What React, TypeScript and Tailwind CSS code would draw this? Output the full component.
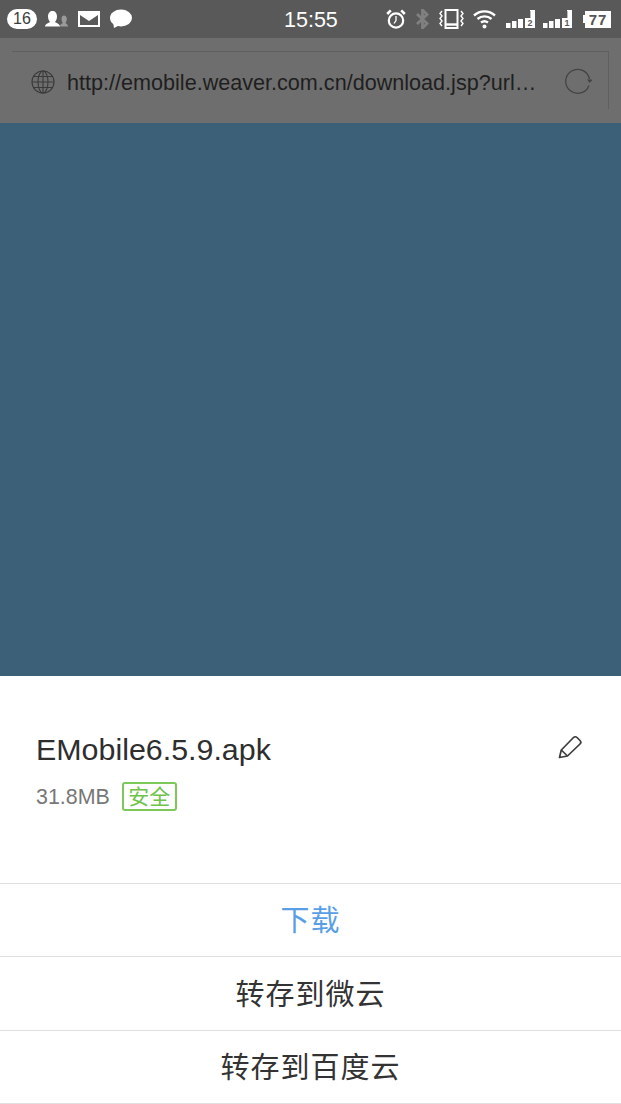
const cjk = "font-['Liberation_Sans','Noto_Sans_CJK_SC',sans-serif]";

function Contacts() {
  return (
    <svg width="24" height="18" viewBox="0 0 24 18" className="block">
      <path d="M15 16.500c0-2 1.500-3 3-3.500-1-1-1.500-2.500-1.500-4 0-2 1-3.500 2.500-3.500s2.800 1.500 2.800 3.500c0 1.500-.5 3-1.500 4 1 .5 2.700 1.500 2.700 3.500z" fill="#9a9a9a" />
      <path d="M0 16.500c0-2.500 3.500-3.500 5-4.500-1-1.200-2-3-2-5.500C3 3 5 1 7.500 1s4.500 2 4.500 5.500c0 2.500-1 4.300-2 5.500 1.500 1 5 2 5 4.500z" fill="#fff" />
    </svg>
  );
}

function Mail() {
  return (
    <svg width="22" height="16" viewBox="0 0 22 16" className="block">
      <path d="M0 0h22v16H0z" fill="#fff" />
      <path d="M2 4l9 6 9-6v10H2z" fill="#595959" />
    </svg>
  );
}

function Bubble() {
  return (
    <svg width="22" height="20" viewBox="0 0 22 20" className="block">
      <ellipse cx="11" cy="9" rx="11" ry="8.500" fill="#fff" />
      <path d="M3 13l1 6 6-3z" fill="#fff" />
    </svg>
  );
}

function Alarm() {
  return (
    <svg width="20" height="20" viewBox="0 0 20 20" fill="none" stroke="#fff" className="block">
      <circle cx="10" cy="11.500" r="7.200" strokeWidth="2.200" />
      <path d="M10 7v4.500l-2 3" strokeWidth="1.300" />
      <path d="M1.200 5l3.600-3.600M18.800 5l-3.600-3.600" strokeWidth="2.600" />
    </svg>
  );
}

function Bluetooth() {
  return (
    <svg width="13" height="20" viewBox="0 0 13 20" fill="none" stroke="#808080" strokeWidth="2.800" className="block">
      <path d="M1 5l10 9.500-4.500 4.500V1L11 5.500 1 15" />
    </svg>
  );
}

function Vibrate() {
  return (
    <svg width="25" height="20" viewBox="0 0 25 20" fill="none" stroke="#fff" className="block">
      <rect x="6.500" y="1" width="12" height="18" strokeWidth="2" />
      <path d="M7 15.500h11" strokeWidth="2.400" />
      <path d="M3 2l-2 2.500L3 7 1 9.500 3 12l-2 2.500L3 17M22 2l2 2.500L22 7l2 2.500-2 2.500 2 2.500-2 2.500" strokeWidth="1.400" />
    </svg>
  );
}

function Wifi() {
  return (
    <svg width="23" height="20" viewBox="0 0 23 20" fill="none" stroke="#fff" strokeWidth="2.400" className="block">
      <path d="M1 6.500c6-5.500 15-5.500 21 0M4.500 10c4-3.500 10-3.500 14 0M8 13.500c2-1.500 5-1.500 7 0" />
      <circle cx="11.500" cy="17.500" r="2" fill="#fff" stroke="none" />
    </svg>
  );
}

function Signal({ sim }: { sim: string }) {
  return (
    <span className="relative block h-[19px] w-[29px]">
      <svg width="29" height="19" viewBox="0 0 29 19" fill="#fff" className="absolute inset-0">
        <path d="M0 13h4.500v5H0zM6 11h4.500v7H6zM12 9h5v9h-5z" />
        <path d="M19 8h10v10H19z" />
        <path d="M24 0h5v8h-5z" />
        <path d="M24 1v7" stroke="#595959" strokeWidth="0.800" />
      </svg>
      <span className="absolute left-[19px] top-[9px] w-[10px] text-center font-['Liberation_Sans',sans-serif] text-[9px] font-bold leading-[9px] text-[#595959]">
        {sim}
      </span>
    </span>
  );
}

function Battery() {
  return (
    <span className="flex w-[28px] items-center">
      <span className="h-[8px] w-[2px] bg-white" />
      <span className="flex h-[17px] w-[26px] items-center justify-center bg-white font-['Liberation_Sans',sans-serif] text-[15px] font-bold leading-none tracking-[1px] text-[#555]">
        77
      </span>
    </span>
  );
}

function Globe() {
  return (
    <svg width="24" height="24" viewBox="0 0 24 24" fill="none" stroke="#3a3a3a" strokeWidth="1.100" className="block">
      <circle cx="12" cy="12" r="11" />
      <ellipse cx="12" cy="12" rx="5" ry="11" />
      <path d="M12 1v22M1 12h22M2.500 6.500h19M2.500 17.500h19" />
    </svg>
  );
}

function Reload() {
  return (
    <svg width="28" height="28" viewBox="0 0 28 28" fill="none" stroke="#444" strokeWidth="1.300" className="block">
      <path d="M25 17.500A12 12 0 1 1 25.500 11" />
      <path d="M23 11.500h5.500l-2.800 3.500z" fill="#444" stroke="none" />
    </svg>
  );
}

function Pencil() {
  return (
    <svg width="24" height="24" viewBox="0 0 24 24" fill="none" stroke="#3c3c3c" strokeWidth="1.700" strokeLinejoin="round" className="block">
      <path d="M1.500 22.500l1.800-7.500L15.500 2.500c1-1 2.500-1 3.500 0l3 3c1 1 1 2.500 0 3.500L9.500 21z" />
      <path d="M3.300 15l6.200 6" />
    </svg>
  );
}

function Row({ label, className }: { label: string; className: string }) {
  return (
    <div className={"flex h-[73.5px] items-center justify-center border-b border-[#e0e0e0] pt-[4px] text-[29px] tracking-[1px] " + className}>
      {label}
    </div>
  );
}

export default function App() {
  return (
    <div className={"flex h-[1104px] w-[621px] flex-col overflow-hidden bg-white " + cjk}>
      <div className="flex h-[38px] items-center bg-[#595959] pl-[7px] pt-[1px]">
        <span className="mr-[8px] flex h-[20px] w-[30px] items-center justify-center rounded-full bg-white text-[16px] leading-none text-[#3c3c3c]">
          16
        </span>
        <span className="mr-[9px]"><Contacts /></span>
        <span className="mr-[10px]"><Mail /></span>
        <Bubble />
        <span className="ml-[152px] mr-[49px] mt-[2px] w-[53px] text-[21.500px] leading-none text-white">15:55</span>
        <span className="mr-[10px]"><Alarm /></span>
        <span className="mr-[10px]"><Bluetooth /></span>
        <span className="mr-[9px]"><Vibrate /></span>
        <span className="mr-[10px]"><Wifi /></span>
        <span className="mr-[8px]"><Signal sim="2" /></span>
        <span className="mr-[11px]"><Signal sim="1" /></span>
        <Battery />
      </div>
      <div className="h-[85px] bg-[#6e6e6e] pl-[12px] pr-[12px] pt-[13px]">
        <div className="flex h-[58px] items-center border-r border-t border-[#5f5f5f] pl-[19px] pr-[16px] pt-[3px]">
          <Globe />
          <span className="ml-[12px] mt-[2px] text-[21.600px] leading-none text-[#1f1f1f]">
            http://emobile.weaver.com.cn/download.jsp?url…
          </span>
          <span className="ml-auto"><Reload /></span>
        </div>
      </div>
      <div className="h-[553px] bg-[#3c6078]" />
      <div className="flex h-[207px] flex-col pl-[36px] pr-[39px] pt-[55px]">
        <div className="flex items-center justify-between">
          <span className="text-[30.400px] leading-[36px] text-[#2e2e2e]">EMobile6.5.9.apk</span>
          <span className="mb-[4px]"><Pencil /></span>
        </div>
        <div className="mt-[15px] flex items-center">
          <span className="mt-[3px] text-[21.400px] leading-none text-[#777]">31.8MB</span>
          <span className="ml-[12px] flex h-[29px] w-[55px] items-center justify-center rounded-[3px] border-2 border-[#7cc95a] text-[21px] leading-none text-[#6fc24a]">
            安全
          </span>
        </div>
      </div>
      <div className="border-t border-[#e0e0e0]">
        <Row label="下载" className="text-[#5a9fe6]" />
        <Row label="转存到微云" className="text-[#333]" />
        <Row label="转存到百度云" className="text-[#333]" />
      </div>
    </div>
  );
}
